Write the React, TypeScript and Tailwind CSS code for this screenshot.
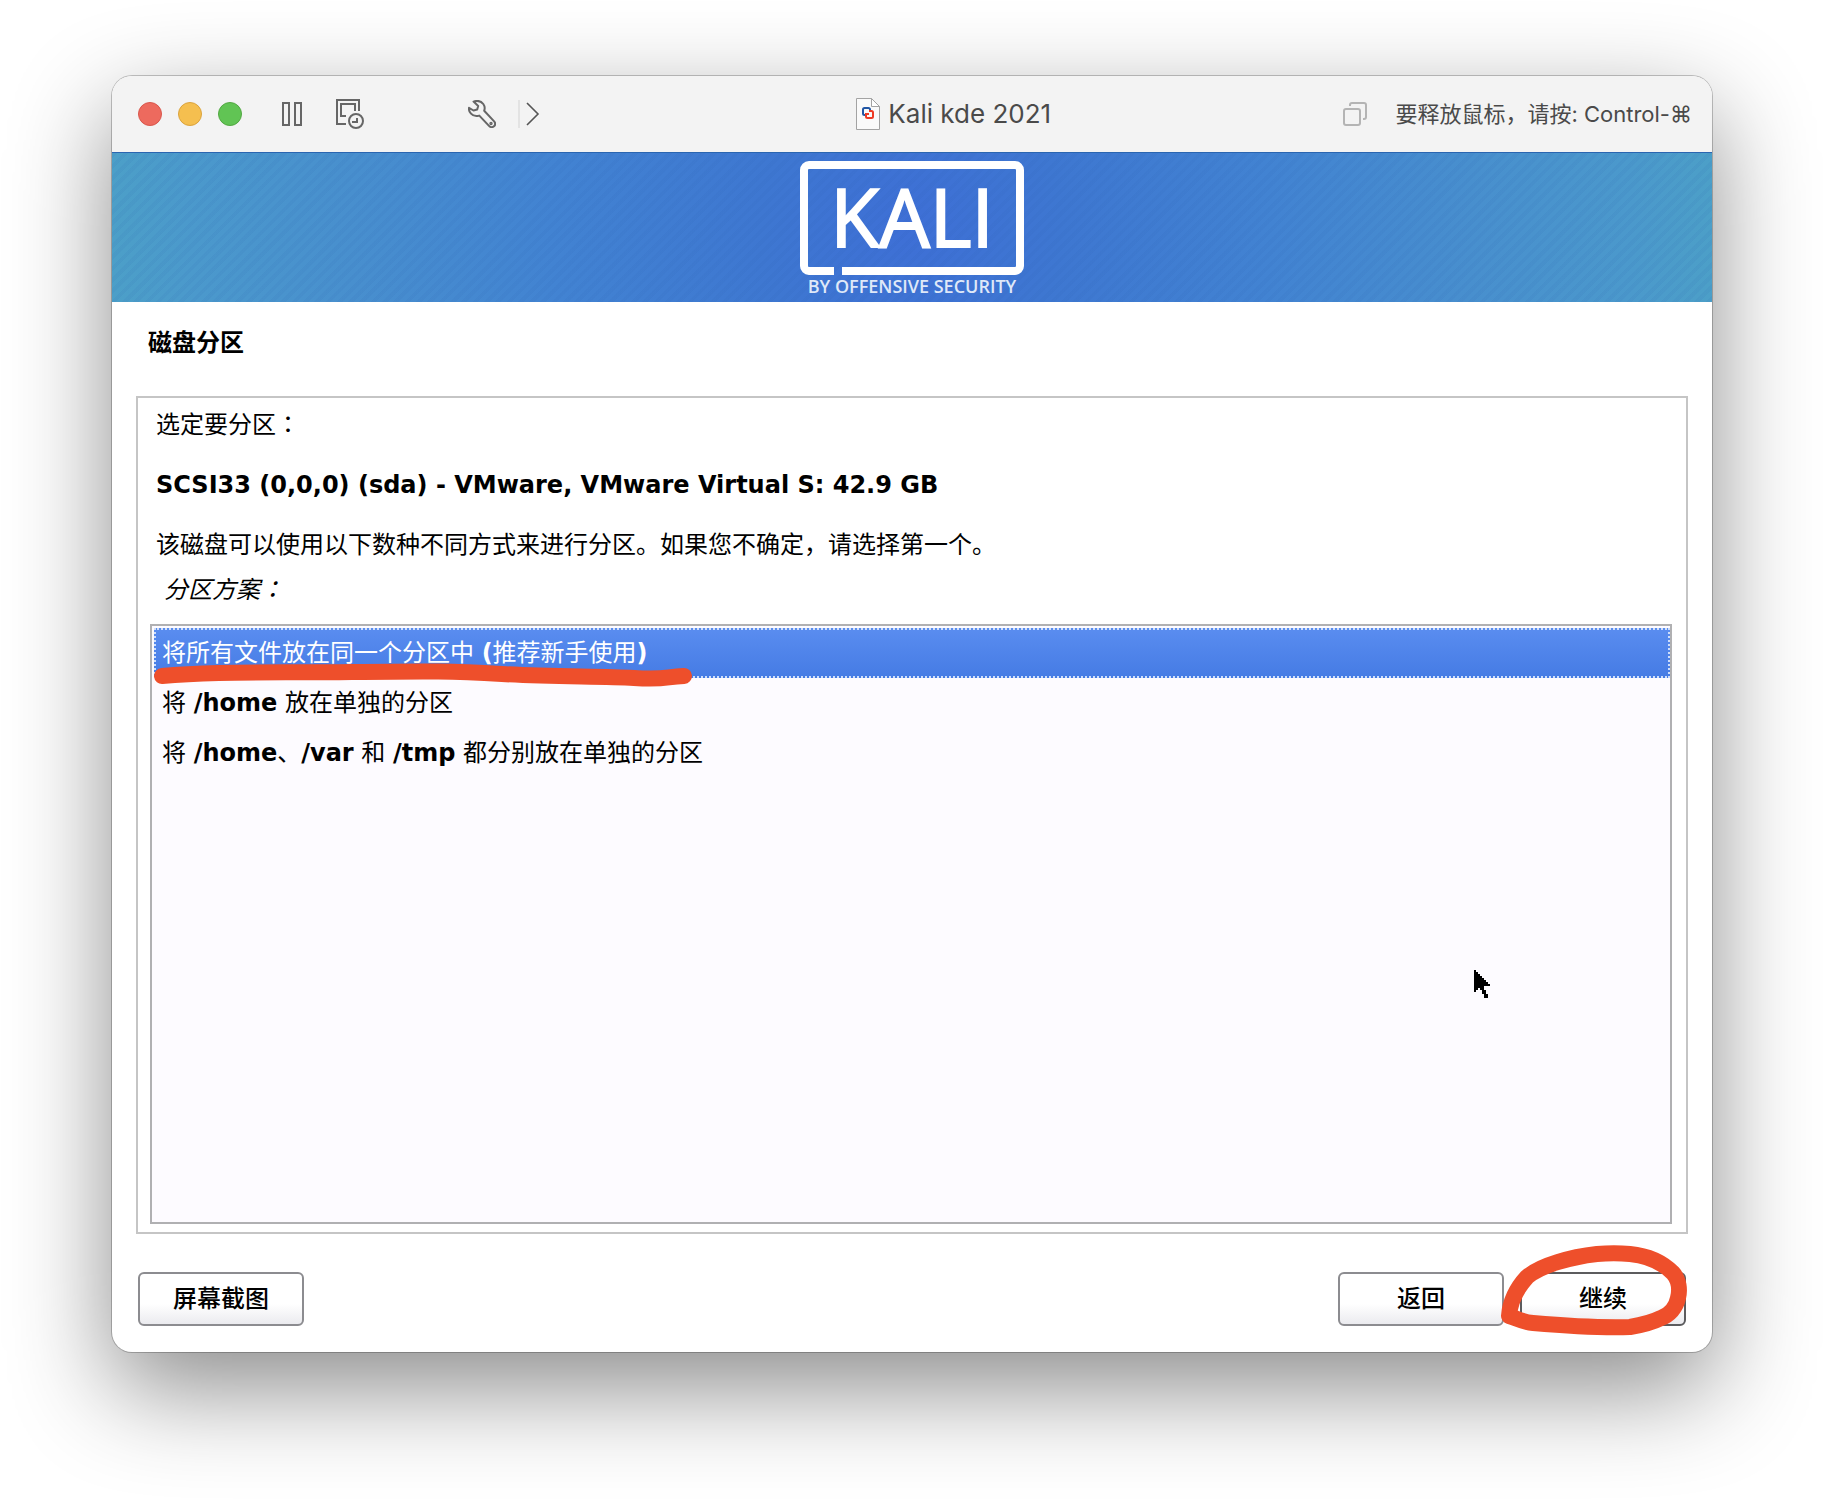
import { useState, type ReactNode } from "react";

const ink = "#EE4F2B";

function TrafficLights() {
  return (
    <div className="flex gap-4">
      <button aria-label="关闭" className="size-6 rounded-full border border-[#d9564c] bg-[#ed6a5e]" />
      <button aria-label="最小化" className="size-6 rounded-full border border-[#dba33d] bg-[#f5bf4f]" />
      <button aria-label="缩放" className="size-6 rounded-full border border-[#52a842] bg-[#61c454]" />
    </div>
  );
}

function ToolButton({ label, children, className = "" }: { label: string; children: ReactNode; className?: string }) {
  return (
    <button aria-label={label} className={`shrink-0 ${className}`}>
      {children}
    </button>
  );
}

function TitleBar() {
  return (
    <header className="flex h-[76px] shrink-0 items-center justify-between rounded-t-[20px] bg-[#f3f3f3] pl-[26px] pr-5 font-['Inter','Noto_Sans_CJK_SC',sans-serif] text-[#4a4a4a]">
      <div className="flex items-center">
        <TrafficLights />
        <ToolButton label="暂停" className="ml-10">
          <svg width="20" height="24" viewBox="0 0 20 24" fill="none" stroke="#666" strokeWidth="2">
            <path d="M1 1h6v22H1zM13 1h6v22h-6z" />
          </svg>
        </ToolButton>
        <ToolButton label="快照" className="ml-[34px]">
          <svg width="28" height="30" viewBox="0 0 28 30" fill="none" stroke="#666" strokeWidth="2">
            <path d="M10 25H1V1h22v11" />
            <path d="M10 17H5V5h14v7" />
            <circle cx="20" cy="22" r="7" />
            <path d="M21 19v4h-5" />
          </svg>
        </ToolButton>
        <ToolButton label="设置" className="ml-[104px]">
          <svg width="28" height="28" viewBox="0 0 28 28" fill="none" stroke="#666" strokeWidth="2" strokeLinejoin="round">
            <path d="M5.5 1.6C9 0.4 13 1 15.3 4c1.6 2.200 1.600 4.800.9 6.700l9.700 10.400c1.500 1.700 1.500 3.900.1 5.200s-3.600 1.100-5-.4L11.300 15.600c-3 .9-6.300.3-8.300-1.900C1.200 11.800.7 10 1 7.800l4.500 2.700 3.700-1 1-3.600z" />
            <circle cx="23" cy="23.500" r="0.700" />
          </svg>
        </ToolButton>
        <span className="ml-[22px] h-7 w-0.5 bg-[#e3e3e3]" />
        <ToolButton label="更多" className="ml-[6px]">
          <svg width="14" height="24" viewBox="0 0 14 24" fill="none" stroke="#555" strokeWidth="1.600">
            <path d="M1 1l11 11L1 23" />
          </svg>
        </ToolButton>
      </div>

      <h1 className="flex items-center gap-2 pl-6 text-[26px] leading-8">
        <svg width="24" height="32" viewBox="0 0 24 32" fill="none">
          <path d="M.5.500h15l8 8v23H.5z" fill="#fafafa" stroke="#a3a3a3" />
          <path d="M15.500.500v8h8z" fill="#fff" stroke="#a3a3a3" />
          <path d="M10 17H8.500a1.500 1.500 0 0 1-1.500-1.500v-4A1.500 1.500 0 0 1 8.500 10h4a1.500 1.500 0 0 1 1.500 1.500V13" stroke="#2257a5" strokeWidth="2" />
          <path d="M13 13h2.500a1.500 1.500 0 0 1 1.500 1.500v4a1.500 1.500 0 0 1-1.500 1.500h-4a1.500 1.500 0 0 1-1.500-1.500V16h3" stroke="#ee3a24" strokeWidth="2" />
        </svg>
        Kali kde 2021
      </h1>

      <div className="flex items-center gap-7">
        <svg width="24" height="24" viewBox="0 0 24 24" fill="none" stroke="#b4b4b4" strokeWidth="2">
          <rect x="1" y="7" width="16" height="16" rx="2" />
          <path d="M7 4V3a2 2 0 0 1 2-2h12a2 2 0 0 1 2 2v12a2 2 0 0 1-2 2h-1" />
        </svg>
        <p className="text-[22px] leading-8">要释放鼠标，请按: Control-⌘</p>
      </div>
    </header>
  );
}

function Banner() {
  return (
    <div className="flex h-[150px] shrink-0 justify-center border-t border-[#2a65b0] bg-[repeating-linear-gradient(135deg,rgba(40,90,170,0.07)_0px,rgba(40,90,170,0.07)_4px,transparent_4px,transparent_8px),radial-gradient(circle_800px_at_center,#3e6fd6_0px,#3e77d1_150px,#4283d2_360px,#488fce_560px,#4b99cc_720px,#4c9fc8_800px)] pt-2">
      <svg width="224" height="141" viewBox="0 0 224 141" role="img" aria-label="KALI BY OFFENSIVE SECURITY">
        <path
          d="M34 110H9a5 5 0 0 1-5-5V9a5 5 0 0 1 5-5h206a5 5 0 0 1 5 5v96a5 5 0 0 1-5 5H42"
          fill="none"
          stroke="#fff"
          strokeWidth="8"
        />
        <text
          x="112"
          y="86"
          textAnchor="middle"
          strokeWidth="2"
          className="fill-white stroke-white font-['Open_Sans'] text-[80px]"
        >
          KALI
        </text>
        <text x="112" y="132" textAnchor="middle" className="fill-[#dfe8f8] font-['Open_Sans'] text-[18px] font-semibold">
          BY OFFENSIVE SECURITY
        </text>
      </svg>
    </div>
  );
}

function Colon() {
  return <span className="font-['Noto_Sans_CJK_TC',sans-serif] leading-none">：</span>;
}

const schemes: ReactNode[] = [
  <>
    将所有文件放在同一个分区中 <b>(</b>推荐新手使用<b>)</b>
  </>,
  <>
    将 <b>/home</b> 放在单独的分区
  </>,
  <>
    将 <b>/home</b>、<b>/var</b> 和 <b>/tmp</b> 都分别放在单独的分区
  </>,
];

function SchemeList() {
  const [selected, setSelected] = useState(0);
  return (
    <div
      role="listbox"
      aria-labelledby="scheme-label"
      className="relative mb-2 ml-3 mr-3.5 mt-[19px] flex flex-1 flex-col border-2 border-[#b0b0b2] bg-[#fdfbff] pl-0.5 pt-0.5"
    >
      {schemes.map((scheme, i) => (
        <button
          key={i}
          role="option"
          aria-selected={i === selected}
          onClick={() => setSelected(i)}
          className={
            i === selected
              ? "h-[50px] border-2 border-dotted border-[#cfdffb] bg-linear-to-b from-[#5a8df0] to-[#457be4] bg-origin-border px-1.5 text-left text-white"
              : "h-[50px] px-2 text-left"
          }
        >
          {scheme}
        </button>
      ))}
      <svg className="pointer-events-none absolute left-0 top-9" width="544" height="30" viewBox="0 0 544 30" fill="none">
        <path
          d="M10 14C60 9 120 11 200 10s100-1 150 2 100 2 132 4 30-1 50-2"
          stroke={ink}
          strokeWidth="16"
          strokeLinecap="round"
          strokeLinejoin="round"
        />
      </svg>
      <svg className="pointer-events-none absolute right-[180px] top-[344px]" width="16" height="28" viewBox="0 0 16 28">
        <path d="M0 0h2v2h2v2h2v2h2v2h2v2h2v2h2v2h2v2h-6v4h2v4h2v4h-4v-4H8v-4H6v-2H4v2H2v2H0z" />
      </svg>
    </div>
  );
}

function DialogButton({ children, primary = false }: { children: ReactNode; primary?: boolean }) {
  return (
    <button
      className={
        primary
          ? "h-[54px] w-[166px] rounded-md border-2 border-[#5c5c5e] bg-linear-to-b from-white from-60% to-[#ebebef] font-medium"
          : "h-[54px] w-[166px] rounded-md border-2 border-[#8c8c90] bg-linear-to-b from-white from-60% to-[#ebebef] font-medium"
      }
    >
      {children}
    </button>
  );
}

export default function App() {
  return (
    <div className="flex min-h-screen flex-col bg-white px-28 pb-[148px] pt-[76px]">
      <main className="flex flex-1 flex-col rounded-[20px] bg-white shadow-[0_0_0_1px_rgba(0,0,0,0.22),0_36px_100px_rgba(0,0,0,0.46)]">
        <TitleBar />
        <Banner />
        <section className="flex flex-1 flex-col px-6 pb-[26px] pt-[25px] font-['DejaVu_Sans','Noto_Sans_CJK_SC',sans-serif] text-2xl leading-8 text-black">
          <h2 className="pl-3 font-bold">磁盘分区</h2>
          <div className="mt-[37px] flex flex-1 flex-col border-2 border-[#c5c5c5] leading-[30px]">
            <div className="flex flex-col gap-[30px] px-[18px] pt-3">
              <p>
                选定要分区
                <Colon />
              </p>
              <p className="font-bold">SCSI33 (0,0,0) (sda) - VMware, VMware Virtual S: 42.9 GB</p>
              <p>该磁盘可以使用以下数种不同方式来进行分区。如果您不确定，请选择第一个。</p>
            </div>
            <p id="scheme-label" className="mt-[15px] px-[26px] italic">
              分区方案
              <Colon />
            </p>
            <SchemeList />
          </div>
          <div className="mt-[38px] flex gap-4 px-0.5">
            <DialogButton>屏幕截图</DialogButton>
            <span className="flex-1" />
            <DialogButton>返回</DialogButton>
            <div className="relative">
              <DialogButton primary>继续</DialogButton>
              <svg
                className="pointer-events-none absolute -left-6 -top-[30px] max-w-none"
                width="200"
                height="100"
                viewBox="0 0 200 100"
                fill="none"
              >
                <path
                  d="M13 74C14 60 20 47 31 35C45 23 75 15 101 12C113 11 123 11 134 12C155 14 169 23 177 31C183 38 184 48 182 56C180 66 173 73 165 76C155 81 146 83 134 85C100 86 60 83 37 81C26 80 20 76 13 74Z"
                  stroke={ink}
                  strokeWidth="16"
                  strokeLinejoin="round"
                />
              </svg>
            </div>
          </div>
        </section>
      </main>
    </div>
  );
}
